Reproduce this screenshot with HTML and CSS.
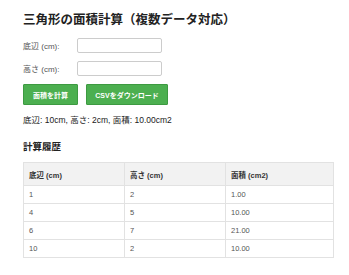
FILE: index.html
```html
<!DOCTYPE html>
<html lang="ja">
<head>
<meta charset="utf-8">
<link rel="stylesheet" href="styles.css">
</head>
<body>
<div class="page">
  <h1 class="title">三角形の面積計算（複数データ対応）</h1>
  <div class="field">
    <label class="label">底辺 (cm):</label>
    <input class="input" type="text">
  </div>
  <div class="field">
    <label class="label">高さ (cm):</label>
    <input class="input" type="text">
  </div>
  <div class="buttons">
    <button class="btn btn-calc">面積を計算</button>
    <button class="btn btn-csv">CSVをダウンロード</button>
  </div>
  <p class="result">底辺: 10cm, 高さ: 2cm, 面積: 10.00cm2</p>
  <h2 class="history">計算履歴</h2>
  <table class="table">
    <thead>
      <tr><th class="c1">底辺 (cm)</th><th class="c2">高さ (cm)</th><th>面積 (cm2)</th></tr>
    </thead>
    <tbody>
      <tr><td>1</td><td>2</td><td>1.00</td></tr>
      <tr><td>4</td><td>5</td><td>10.00</td></tr>
      <tr><td>6</td><td>7</td><td>21.00</td></tr>
      <tr><td>10</td><td>2</td><td>10.00</td></tr>
    </tbody>
  </table>
</div>
</body>
</html>
```
FILE: styles.css
```css
html, body {
  margin: 0;
  padding: 0;
  background: #fff;
}
body {
  font-family: "Liberation Sans", Arial, "Noto Sans CJK JP", sans-serif;
  color: #333;
}
.page {
  width: 311px;
  padding: 13px 0 0 23px;
}
.title {
  margin: 0 0 10px 0;
  font-size: 12.5px;
  line-height: 15px;
  font-weight: bold;
  color: #222;
}
.field {
  display: flex;
  align-items: center;
  margin-bottom: 8px;
}
.label {
  width: 54px;
  font-size: 8px;
  color: #555;
}
.input {
  box-sizing: border-box;
  width: 85px;
  height: 15px;
  margin: 0;
  border: 1px solid #ccc;
  border-radius: 2px;
  padding: 0 3px;
  background: #fff;
}
.buttons {
  display: flex;
  gap: 8px;
  margin-bottom: 10px;
}
.btn {
  box-sizing: border-box;
  height: 21px;
  margin: 0;
  background: #4caf50;
  border: 1px solid #3d9a41;
  border-radius: 1px;
  color: #fff;
  font-family: inherit;
  font-size: 7px;
  font-weight: bold;
  padding: 0;
}
.btn-calc { width: 55px; }
.btn-csv { width: 82px; }
.result {
  margin: 0 0 16px 0;
  font-size: 8.5px;
  line-height: 10px;
  color: #222;
}
.history {
  margin: 0 0 9px 0;
  font-size: 9.5px;
  line-height: 12px;
  font-weight: bold;
  color: #222;
}
.table {
  width: 311px;
  border-collapse: collapse;
  font-size: 7.5px;
  color: #555;
}
.table th, .table td {
  border: 1px solid #e2e2e2;
  text-align: left;
  padding: 0 5px;
}
.table th {
  height: 22px;
  background: #f2f2f2;
  font-weight: bold;
  color: #333;
}
.table td {
  height: 17px;
}
.c1, .c2 { width: 90px; }
```
